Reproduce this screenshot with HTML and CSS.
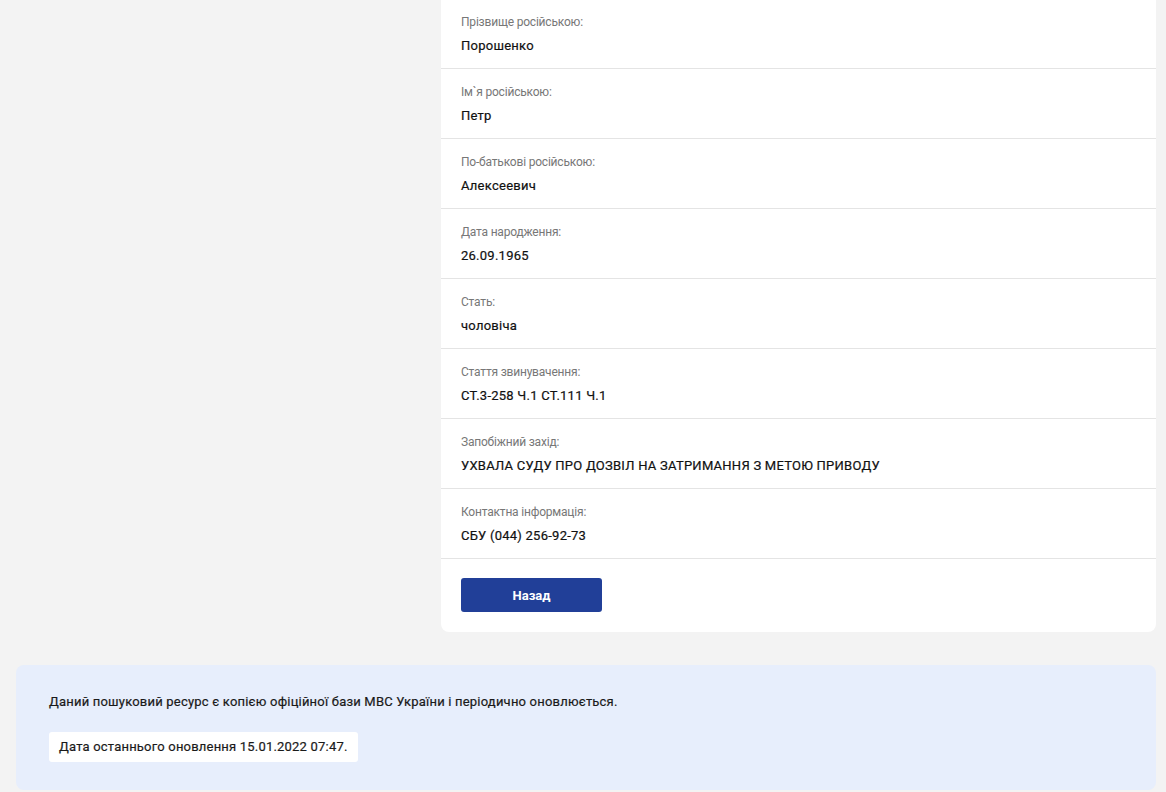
FILE: index.html
```html
<!DOCTYPE html>
<html lang="uk">

<head>
    <meta charset="UTF-8">
    <meta name="viewport" content="width=device-width, initial-scale=1.0">
    <title>Розшук осіб</title>
    <link rel="stylesheet" href="styles.css">
</head>

<body>
    <div class="page">
        <div class="layout">
            <div class="sidebar"></div>

            <!-- Person details -->
            <div class="card">
                <div class="row">
                    <div class="label">Прізвище російською:</div>
                    <div class="value">Порошенко</div>
                </div>
                <div class="row">
                    <div class="label">Ім`я російською:</div>
                    <div class="value">Петр</div>
                </div>
                <div class="row">
                    <div class="label">По-батькові російською:</div>
                    <div class="value">Алексеевич</div>
                </div>
                <div class="row">
                    <div class="label">Дата народження:</div>
                    <div class="value">26.09.1965</div>
                </div>
                <div class="row">
                    <div class="label">Стать:</div>
                    <div class="value">чоловіча</div>
                </div>
                <div class="row">
                    <div class="label">Стаття звинувачення:</div>
                    <div class="value">СТ.3-258 Ч.1 СТ.111 Ч.1</div>
                </div>
                <div class="row">
                    <div class="label">Запобіжний захід:</div>
                    <div class="value">УХВАЛА СУДУ ПРО ДОЗВІЛ НА ЗАТРИМАННЯ З МЕТОЮ ПРИВОДУ</div>
                </div>
                <div class="row">
                    <div class="label">Контактна інформація:</div>
                    <div class="value">СБУ (044) 256-92-73</div>
                </div>
                <div class="actions">
                    <button class="back">Назад</button>
                </div>
            </div>
        </div>

        <!-- Footer note -->
        <div class="notice">
            <p class="notice-text">Даний пошуковий ресурс є копією офіційної бази МВС України і періодично оновлюється.</p>
            <span class="updated">Дата останнього оновлення 15.01.2022 07:47.</span>
        </div>
    </div>
</body>

</html>
```

FILE: styles.css
```css
body {
    margin: 0;
    padding: 0;
    background: #f3f3f3;
    font-family: Roboto, "Noto Sans", Arial, sans-serif;
    color: #1a1a1a;
}

.page {
    padding: 0 10px 0 16px;
}

/* Two columns */
.layout {
    display: grid;
    grid-template-columns: 409px 1fr;
    gap: 16px;
    margin-top: -1px;
}

.card {
    background: #fff;
    border-radius: 0 0 8px 8px;
}

.row {
    padding: 15px 20px 14px;
    border-bottom: 1px solid #e4e4e4;
}

.label {
    font-size: 12px;
    line-height: 16px;
    color: #777;
    margin-bottom: 8px;
    letter-spacing: -0.2px;
}

.value {
    font-size: 13px;
    line-height: 16px;
    color: #111;
    letter-spacing: 0.25px;
    -webkit-text-stroke: 0.2px #111;
}

/* Buttons */
.actions {
    padding: 19px 20px 20px;
}

.back {
    width: 141px;
    height: 34px;
    border: none;
    border-radius: 3px;
    background: #213f98;
    color: #fff;
    font-family: Roboto, Arial, sans-serif;
    font-size: 13px;
    font-weight: bold;
    cursor: pointer;
}

/* Footer */
.notice {
    margin-top: 33px;
    background: #e7eefc;
    border-radius: 8px;
    padding: 28px 33px 28px;
}

.notice-text {
    margin: 0 0 21px;
    font-size: 13px;
    line-height: 18px;
    letter-spacing: 0.2px;
    -webkit-text-stroke: 0.2px #1a1a1a;
}

.updated {
    display: inline-block;
    background: #fff;
    border-radius: 3px;
    padding: 0 10px;
    line-height: 30px;
    font-size: 13px;
    letter-spacing: 0.2px;
    -webkit-text-stroke: 0.2px #1a1a1a;
}
```
